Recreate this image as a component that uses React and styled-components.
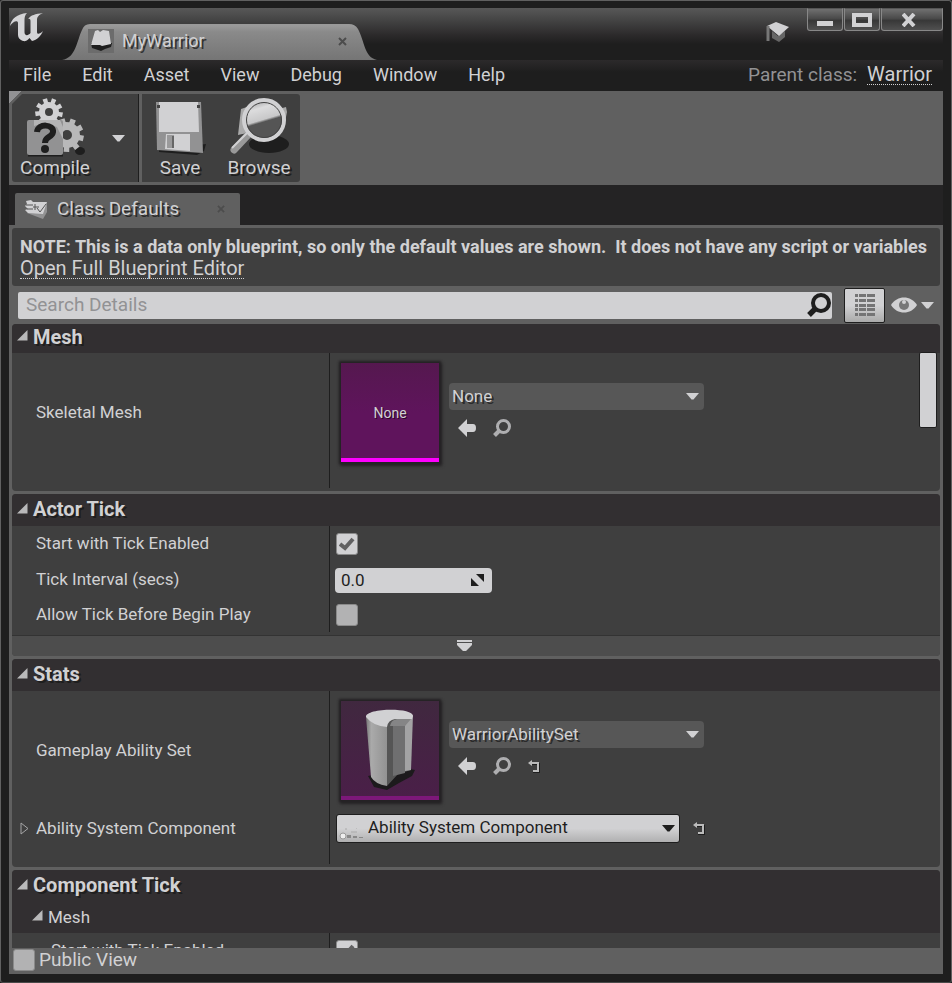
import React from "react";
import styled, { createGlobalStyle, css } from "styled-components";

const c = {
  ink: "#1e1e1e",
  frame: "#606060",
  panel: "#3f3f3f",
  head: "#322f31",
  text: "#d1d1d3",
  mid: "#929294",
  magenta: "#5f145c",
};

const Global = createGlobalStyle`
  *, *::before, *::after { box-sizing: border-box; }
  body { margin: 0; background: ${c.ink}; }
  body, button, input, select {
    font-family: Roboto, "Liberation Sans", sans-serif;
    font-size: 17px;
    line-height: 20px;
    color: ${c.text};
  }
  button { border: 0; padding: 0; background: none; }
  svg { display: block; flex: none; }
`;

const Window = styled.div`
  height: 100vh;
  display: flex;
  flex-direction: column;
  padding: 7px 8px 8px;
  border: 1px solid ${c.frame};
  border-bottom-color: #4a4a4a;
  border-radius: 3px;
  background: ${c.ink};
  overflow: hidden;
`;

const TitleBar = styled.header`
  flex: none;
  display: flex;
  height: 52px;
  background: linear-gradient(#585858, #444 12px, #2c2a2b 27px, ${c.ink} 36px);
`;

const Logo = styled.div`
  width: 53px;
  padding-top: 4px;
`;

const DocTab = styled.div`
  width: 315px;
  height: 36px;
  margin-top: 16px;
  padding: 0 30px 2px 26px;
  display: flex;
  align-items: center;
  background: linear-gradient(#999 2px, #8a8a8a 8px, #757575);
  clip-path: path("M0 36C14 34 15 16 20 6Q22 0 28 0H287Q293 0 296 5C303 18 302 33 315 36Z");
`;

const DocTitle = styled.span`
  flex: 1;
  margin-left: 8px;
  font-size: 18px;
  line-height: 22px;
  text-shadow: 2px 2px 0 #333;
`;

const CloseTab = styled.button`
  display: flex;
  color: #4c4c4c;
`;

const Tutorial = styled.button`
  margin: 13px 17px 0 auto;
  align-self: flex-start;
`;

const WindowButtons = styled.div`
  display: flex;
  height: 23px;
  gap: 1px;
`;

const WindowButton = styled.button`
  width: ${(p) => (p.$wide ? 62 : 36)}px;
  display: grid;
  place-items: center;
  border: 1px solid #888;
  border-top-color: #555;
  border-radius: 0 0 3px 3px;
  background: linear-gradient(#707070, #4a4a4a 45%, #383838 55%, #505050);
`;

const MenuBar = styled.nav`
  flex: none;
  display: flex;
  align-items: center;
  height: 31px;
  padding: 0 11px 2px 14px;
  background: linear-gradient(#2c2a2b, ${c.ink} 12px);
`;

const MenuItem = styled.button`
  margin-right: 31px;
  font-size: 18px;
  line-height: 22px;
`;

const ParentClass = styled.div`
  margin-left: auto;
  display: flex;
  align-items: baseline;
  gap: 10px;
  font-size: 19px;
  line-height: 22px;
  color: ${c.mid};
`;

const DottedLink = styled.a`
  align-self: ${(p) => (p.$inline ? "baseline" : "flex-start")};
  color: ${c.text};
  font-size: 20px;
  line-height: 20px;
  text-decoration: none;
  border-bottom: 1px dotted ${c.text};
`;

const ToolBar = styled.div`
  flex: none;
  display: flex;
  height: 94px;
  padding: 3px;
  background: linear-gradient(135deg, ${c.mid} 9px, ${c.frame} 9px);
`;

const ToolGroup = styled.div`
  display: flex;
  background: ${c.panel};
  border-radius: 3px;
  clip-path: polygon(10px 0, 100% 0, 100% 100%, 0 100%, 0 10px);
`;

const Tool = styled.button`
  display: flex;
  flex-direction: column;
  align-items: center;
  justify-content: flex-end;
  gap: 0;
  width: ${(p) => p.$width}px;
  padding-bottom: 3px;
  font-size: 19px;
  line-height: 22px;
  text-shadow: 2px 2px 0 ${c.ink};
`;

const ToolMenu = styled.button`
  display: grid;
  place-items: center;
  width: 40px;
`;

const ToolDivider = styled.div`
  width: 4px;
  background: ${c.frame};
  border-left: 1px solid ${c.ink};
`;

const TabStrip = styled.div`
  flex: none;
  display: flex;
  height: 40px;
  padding: 8px 6px 0;
  background: #242324;
`;

const PanelTab = styled.div`
  width: 225px;
  display: flex;
  align-items: center;
  padding: 0 15px 0 10px;
  border-radius: 2px 2px 0 0;
  background: ${c.frame};
`;

const PanelTitle = styled.span`
  flex: 1;
  margin-left: 9px;
  font-size: 19px;
  line-height: 22px;
  text-shadow: 2px 2px 0 #2c2c2c;
`;

const Content = styled.main`
  flex: 1;
  min-height: 0;
  display: flex;
  flex-direction: column;
  padding: 3px 3px 0;
  background: ${c.frame};
  overflow: hidden;
`;

const Note = styled.div`
  flex: none;
  display: flex;
  flex-direction: column;
  height: 58px;
  padding: 8px 0 0 8px;
  border-radius: 3px;
  background: ${c.panel};
  white-space: pre;
`;

const NoteText = styled.strong`
  font-size: 18px;
  line-height: 22px;
  font-weight: 700;
`;

const SearchRow = styled.div`
  flex: none;
  display: flex;
  align-items: center;
  height: 38px;
  padding: 0 6px;
`;

const SearchBox = styled.label`
  flex: 1;
  display: flex;
  align-items: center;
  height: 27px;
  padding: 0 1px 0 8px;
  border-radius: 2px;
  background: ${c.text};
`;

const SearchInput = styled.input`
  flex: 1;
  border: 0;
  padding: 0;
  outline: 0;
  background: none;
  font-size: 19px;
  line-height: 22px;
  color: ${c.ink};
  &::placeholder { color: ${c.mid}; opacity: 1; }
`;

const MatrixButton = styled.button`
  display: grid;
  place-items: center;
  width: 41px;
  height: 35px;
  margin-left: 12px;
  border: 1px solid ${c.ink};
  border-radius: 2px;
  background: linear-gradient(${c.text} 50%, #aaa);
`;

const EyeButton = styled.button`
  display: flex;
  align-items: center;
  gap: 4px;
  margin-left: 6px;
`;

const Details = styled.div`
  flex: 1;
  min-height: 0;
  position: relative;
  overflow: hidden;
`;

const ScrollThumb = styled.div`
  position: absolute;
  top: 28px;
  right: 3px;
  width: 18px;
  height: 76px;
  border: 1px solid ${c.ink};
  border-radius: 2px;
  background: ${c.text};
`;

const Section = styled.section`
  margin-bottom: 3px;
  border-radius: 4px;
  background: ${c.panel};
  overflow: hidden;
`;

const SectionHead = styled.h2`
  display: flex;
  align-items: center;
  gap: 5px;
  margin: 0;
  height: ${(p) => (p.$first ? 29 : 32)}px;
  padding: 0 5px ${(p) => (p.$first ? 4 : 2)}px;
  background: ${c.head};
  font-size: 20px;
  line-height: 22px;
  font-weight: 700;
  text-shadow: 2px 2px 0 ${c.ink};
`;

const SubHead = styled.h3`
  display: flex;
  align-items: center;
  gap: 5px;
  margin: 0;
  height: 31px;
  padding: 0 20px 2px;
  background: ${c.head};
  font-size: 17px;
  line-height: 20px;
  font-weight: 400;
`;

const Row = styled.div`
  display: grid;
  grid-template-columns: 317px 1fr;
  height: ${(p) => p.$height || 36}px;
`;

const Name = styled.label`
  display: flex;
  align-items: center;
  padding-left: ${(p) => (p.$nested ? 39 : 24)}px;
  padding-bottom: ${(p) => p.$lift || 2}px;
`;

const ExpandName = styled.div`
  display: flex;
  align-items: center;
  gap: 7px;
  height: 36px;
  padding-left: 8px;
`;

const Value = styled.div`
  display: flex;
  align-items: ${(p) => (p.$top ? "flex-start" : "center")};
  padding-left: 6px;
  border-left: 1px solid ${c.ink};
`;

const ComponentLine = styled.div`
  display: flex;
  align-items: center;
  gap: 13px;
  height: 36px;
`;

const SectionFoot = styled.div`
  height: 3px;
`;

const Advanced = styled.button`
  display: grid;
  place-items: center;
  width: 100%;
  height: 21px;
  padding-right: 24px;
  background: #4d4d4d;
  border-top: 1px solid #333;
`;

const Thumb = styled.div`
  width: 98px;
  height: 99px;
  margin: 10px 10px 0 5px;
  display: grid;
  place-items: center;
  background: linear-gradient(#55184f, ${c.magenta} 50px);
  border-bottom: 4px solid #f0f;
  box-shadow: 0 0 2px 2px #252325, 1px 2px 3px 2px #252325;
  font-size: 14px;
  line-height: 16px;
  text-shadow: 1px 1px 0 #2a0a29;
  ${(p) =>
    p.$asset &&
    css`
      background: linear-gradient(#40283f, #4a1f48);
      border-bottom-color: #7d1879;
    `}
`;

const ThumbText = styled.span`
  padding-top: 4px;
`;

const Picker = styled.div`
  display: flex;
  flex-direction: column;
  gap: 9px;
  margin-top: 30px;
`;

const SelectBox = styled.div`
  display: grid;
  align-items: center;
  width: ${(p) => (p.$light ? 344 : 255)}px;
  & > * { grid-area: 1 / 1; }
  & > svg { justify-self: end; margin-right: 5px; pointer-events: none; }
  & > svg.lead { justify-self: start; align-self: end; margin: 0 0 3px 3px; }
`;

const Select = styled.select`
  appearance: none;
  width: 100%;
  height: ${(p) => (p.$light ? 29 : 27)}px;
  border: 0;
  border-radius: 4px;
  padding: 0 24px 2px 3px;
  background: #575757;
  text-shadow: 2px 2px 0 #2a2a2a;
  ${(p) =>
    p.$light &&
    css`
      border: 1px solid ${c.ink};
      border-radius: 3px;
      padding-left: 31px;
      background: linear-gradient(${c.text} 50%, #b0b0b1);
      color: ${c.ink};
      text-shadow: none;
    `}
`;

const Actions = styled.div`
  display: flex;
  align-items: center;
  gap: 17px;
  height: 18px;
  padding-left: 9px;
`;

const IconButton = styled.button`
  display: flex;
`;

const Check = styled.span`
  display: inline-grid;
  place-items: center;
  & > * { grid-area: 1 / 1; }
  & > svg { pointer-events: none; display: none; }
  & > input:checked + svg { display: block; }
`;

const CheckInput = styled.input`
  appearance: none;
  width: 22px;
  height: 22px;
  margin: 0;
  border: 1px solid #8a8a8a;
  border-radius: 3px;
  background: #b2b2b3;
  &:checked { background: ${c.text}; }
`;

const NumberBox = styled.div`
  display: flex;
  align-items: center;
  width: 157px;
  height: 25px;
  margin-left: -1px;
  padding: 0 8px 1px 6px;
  border-radius: 4px;
  background: ${c.text};
`;

const NumberInput = styled.input`
  flex: 1;
  min-width: 0;
  border: 0;
  padding: 0;
  outline: 0;
  background: none;
  color: ${c.ink};
`;

const Footer = styled.label`
  flex: none;
  display: flex;
  align-items: flex-start;
  gap: 4px;
  height: 26px;
  padding: 1px;
  font-size: 19px;
  line-height: 22px;
`;

/* ---------- icons ---------- */

const Unreal = () => (
  <svg width="36" height="31" viewBox="0 0 36 31" fill="#d4d4d6">
    <path d="M1 14C2 7 8 2 18 1C16 3 15.500 5 15.500 8V20C15.500 24 19 24 21.500 21V9C21.500 7 20.500 6.500 19 7C22 3 26 2 34 1C29.500 3 28 5 28 8V20C28 23 31 22 34 19C32 24 28 28 23 29L20.500 26C18 29 16 29.500 14 29C11 28 9 26 9 23V11C9 8 4 9 1 14Z" />
  </svg>
);

const Arrow = ({ color = c.text }) => (
  <svg width="13" height="7" viewBox="0 0 13 7">
    <path d="M0 0H13L7.500 6.500H5.500Z" fill={color} />
  </svg>
);

const Cross = ({ size = 9 }) => (
  <svg width={size} height={size} viewBox="0 0 9 9">
    <path d="M1 1L8 8M8 1L1 8" stroke="currentColor" strokeWidth="2" />
  </svg>
);

const Expanded = () => (
  <svg width="11" height="13" viewBox="0 0 11 13">
    <path d="M10.500 0V10.500H0Z" fill="#b9b9ba" />
  </svg>
);

const BookIcon = () => (
  <svg width="26" height="24" viewBox="0 0 26 24">
    <path d="M0 0H26V24H0Z" fill="#6c6c6c" />
    <path d="M3 14L24 14L23 18L17 20L13 22L4 19Z" fill={c.ink} />
    <path d="M7 2L10 1L12 3L15 1L21 2L23 15L14 17L12 16L3 16Z" fill={c.text} />
  </svg>
);

const CapIcon = () => (
  <svg width="24" height="22" viewBox="0 0 24 22">
    <path d="M6 10L12 15L19 10V16L13 21L6 17Z" fill="#666" />
    <path d="M1 5L10 1L23 6L13 15Z" fill={c.text} />
    <path d="M2 5V20" stroke="#777" strokeWidth="3" />
  </svg>
);

function gear(cx, cy, r, depth, teeth) {
  const pts = [];
  for (let i = 0; i < teeth; i++) {
    [[-0.3, r], [-0.24, r + depth], [0.24, r + depth], [0.3, r]].forEach(([o, d]) => {
      const a = ((i + 0.3 + o) / teeth) * Math.PI * 2;
      pts.push((cx + Math.cos(a) * d).toFixed(1) + " " + (cy + Math.sin(a) * d).toFixed(1));
    });
  }
  return "M" + pts.join("L") + "Z";
}

const hole = (x, y, r) => `M${x - r} ${y}a${r} ${r} 0 1 0 ${r * 2} 0a${r} ${r} 0 1 0 ${-r * 2} 0Z`;

const CompileIcon = () => (
  <svg width="60" height="60" viewBox="-2 0 60 60">
    <ellipse cx="53" cy="54" rx="5" ry="4" fill={c.ink} />
    <path fillRule="evenodd" d={gear(40, 38, 13, 4, 9) + hole(40, 38, 5)} fill="#b8b8b9" />
    <path fillRule="evenodd" d={gear(22, 15, 10, 4, 9) + hole(22, 15, 4)} fill={c.text} />
    <path d="M1 58H36" stroke={c.ink} strokeWidth="3" />
    <rect y="23" width="36" height="35" rx="2" fill="#929293" />
    <path d="M7 23H33L36 30V42L30 30L17 26L7 29Z" fill="#b4b4b5" />
    <path d="M10 35C11 26 27 27 26 35C25 41 18 39 18 46" fill="none" stroke={c.ink} strokeWidth="6" />
    <circle cx="18" cy="52" r="4" fill={c.ink} />
  </svg>
);

const SaveIcon = () => (
  <svg width="52" height="58" viewBox="0 0 52 58">
    <path d="M5 51L52 45L50 52L43 56L5 53Z" fill={c.ink} />
    <path d="M2 3H47L49 54L3 51Z" fill="#929293" />
    <path d="M5 3H44L45 33H5Z" fill={c.text} />
    <path d="M12 35H36V52L11 50Z" fill={c.text} />
    <path d="M13 36H20V49H13Z" fill="#9a9a9b" />
    <path d="M18 37H20V49H18Z" fill="#666" />
    <path d="M3 6H6V9H3ZM43 6H46V9H43Z" fill="#444" />
  </svg>
);

const BrowseIcon = () => (
  <svg width="60" height="60" viewBox="0 0 60 60">
    <defs>
      <linearGradient id="lens" x1="0" y1="0" x2="0.3" y2="1">
        <stop offset="0" stopColor="#8a8a8b" />
        <stop offset="0.3" stopColor="#dcdcdd" />
        <stop offset="0.58" stopColor="#c8c8c9" />
        <stop offset="0.64" stopColor="#555" />
        <stop offset="1" stopColor="#555" />
      </linearGradient>
    </defs>
    <ellipse cx="40" cy="47" rx="20" ry="9" fill={c.ink} />
    <path d="M12 12L18 10V36L9 38ZM50 12L57 10L58 15L55 30H50Z" fill="#aaa" />
    <path d="M19 38L5 53" stroke="#999" strokeWidth="7" strokeLinecap="round" />
    <path d="M18 36L3 51" stroke={c.text} strokeWidth="2" />
    <circle cx="35" cy="23" r="20" fill="url(#lens)" stroke={c.text} strokeWidth="4" />
    <circle cx="35" cy="23" r="17.500" fill="none" stroke="#444" />
  </svg>
);

const DefaultsIcon = () => (
  <svg width="23" height="19" viewBox="0 0 23 19">
    <path d="M2 13L18 19L22 12V4Z" fill="#929293" />
    <path d="M1 1L6 0L8 2H22L18 14L3 13L0 10L3 9L0 6L2 4Z" fill={c.text} />
    <path d="M1 5H8M2 9H8M10 4V10M8 7H14M12 8L15 12L21 4" fill="none" stroke="#555" />
  </svg>
);

const Lens = ({ size = 18, color = "#aeaeb0", width = 3 }) => (
  <svg width={size} height={size} viewBox="0 0 18 18" fill="none" stroke={color}>
    <circle cx="10.500" cy="7.500" r="6" strokeWidth={width} />
    <path d="M6 12L1.500 16.500" strokeWidth="4" />
  </svg>
);

const MatrixIcon = () => (
  <svg width="21" height="23" viewBox="0 0 21 23" fill="#747475">
    {[0, 5, 10, 14, 19].map((y) => (
      <path key={y} d={`M1 ${y}H4V${y + 3}H1ZM5 ${y}H12V${y + 3}H5ZM13 ${y}H21V${y + 3}H13Z`} />
    ))}
  </svg>
);

const EyeIcon = () => (
  <svg width="26" height="16" viewBox="0 0 26 16">
    <path d="M0 8C6 -2 20 -2 26 8C20 18 6 18 0 8Z" fill={c.text} />
    <circle cx="13" cy="8" r="5" fill="#777" />
    <circle cx="13" cy="5" r="2" fill={c.text} />
  </svg>
);

const UseArrow = () => (
  <svg width="18" height="18" viewBox="0 0 18 18">
    <path d="M0 9L9 0V5H15Q18 5 18 9Q18 13 15 13H9V18Z" fill={c.text} />
  </svg>
);

const ResetIcon = () => (
  <svg width="12" height="13" viewBox="0 0 12 13" fill="none">
    <path d="M3 4H11V12H5" stroke={c.ink} strokeWidth="2" />
    <path d="M2 3H10V11H5" stroke="#bbb" strokeWidth="2" />
    <path d="M0 3L4 0V6Z" fill="#bbb" />
  </svg>
);

const Tick = () => (
  <svg width="16" height="14" viewBox="0 0 16 14">
    <path d="M1 7L6 11L14 2" fill="none" stroke="#616162" strokeWidth="4" />
  </svg>
);

const SpinIcon = () => (
  <svg width="13" height="12" viewBox="0 0 13 12" fill={c.ink}>
    <path d="M5 0H13V8Z M0 4L8 12H0Z" />
  </svg>
);

const AdvancedIcon = () => (
  <svg width="15" height="12" viewBox="0 0 15 12" fill={c.text}>
    <path d="M0 0H15V2H0ZM0 3H15V5L9 11H6L0 5Z" />
  </svg>
);

const CollapsedIcon = () => (
  <svg width="9" height="13" viewBox="0 0 9 13">
    <path d="M1 1L8 6.500L1 12Z" fill="none" stroke="#a5a5a6" />
  </svg>
);

const CylinderIcon = () => (
  <svg width="90" height="86" viewBox="0 0 90 86">
    <defs>
      <linearGradient id="side">
        <stop offset="0" stopColor="#777" />
        <stop offset="0.25" stopColor="#aaa" />
        <stop offset="1" stopColor="#929292" />
      </linearGradient>
    </defs>
    <path d="M23 70L60 62L70 64L67 70L54 77L42 84L29 81Z" fill="#1c1a1c" />
    <path d="M21 11L42 13V80Q30 78 26 71Z" fill="url(#side)" />
    <path d="M42 12L67 9L66 64L53 68L42 80Z" fill="#555" />
    <path d="M48 15H60V67L48 70Z" fill="#6f6f70" />
    <path d="M60 11L68 9L66 64L60 65Z" fill="#a3a3a4" />
    <path d="M21 11C20 2 68 1 68 10L67 13H50Q43 14 42 21Q28 20 21 11Z" fill={c.text} />
    <path d="M45 20Q46 14 52 13L66 13L60 20Z" fill="#858586" />
  </svg>
);

const ComponentIcon = () => (
  <svg className="lead" width="24" height="12" viewBox="0 0 24 12">
    <circle cx="4" cy="8" r="3" fill="#eee" stroke="#999" />
    <path d="M8 7H12V10H8ZM14 8H18V10H14ZM20 9H24V10H20Z" fill="#888" />
    <path d="M6 1H8M17 0H18M12 4H18" stroke="#aaa" />
  </svg>
);

/* ---------- parts ---------- */

function Combo({ id, label, value, light }) {
  return (
    <SelectBox $light={light}>
      <Select id={id} aria-label={label} $light={light} defaultValue={value}>
        <option>{value}</option>
      </Select>
      {light && <ComponentIcon />}
      <Arrow color={light ? c.ink : c.text} />
    </SelectBox>
  );
}

function CheckBox({ id, checked }) {
  return (
    <Check>
      <CheckInput id={id} type="checkbox" defaultChecked={checked} />
      <Tick />
    </Check>
  );
}

function Heading({ children, first }) {
  return (
    <SectionHead $first={first}>
      <Expanded />
      {children}
    </SectionHead>
  );
}

export default function App() {
  return (
    <>
      <Global />
      <Window>
        <TitleBar>
          <Logo><Unreal /></Logo>
          <DocTab>
            <BookIcon />
            <DocTitle>MyWarrior</DocTitle>
            <CloseTab aria-label="Close MyWarrior"><Cross /></CloseTab>
          </DocTab>
          <Tutorial aria-label="Tutorials"><CapIcon /></Tutorial>
          <WindowButtons>
            <WindowButton aria-label="Minimize">
              <svg width="18" height="16" viewBox="0 0 18 16"><path d="M1 9H17V14H1Z" fill={c.text} /></svg>
            </WindowButton>
            <WindowButton aria-label="Maximize">
              <svg width="20" height="14" viewBox="0 0 20 14"><path d="M2 2H18V12H2Z" fill="none" stroke={c.text} strokeWidth="4" /></svg>
            </WindowButton>
            <WindowButton $wide aria-label="Close">
              <svg width="20" height="14" viewBox="2 0 20 14"><path d="M3 1L14 13M14 1L3 13" stroke={c.text} strokeWidth="4" /></svg>
            </WindowButton>
          </WindowButtons>
        </TitleBar>

        <MenuBar>
          {["File", "Edit", "Asset", "View", "Debug", "Window", "Help"].map((m) => (
            <MenuItem key={m}>{m}</MenuItem>
          ))}
          <ParentClass>
            Parent class:
            <DottedLink $inline href="#warrior">Warrior</DottedLink>
          </ParentClass>
        </MenuBar>

        <ToolBar>
          <ToolGroup>
            <Tool $width={86}><CompileIcon />Compile</Tool>
            <ToolMenu aria-label="Compile options"><Arrow /></ToolMenu>
            <ToolDivider />
            <Tool $width={76}><SaveIcon />Save</Tool>
            <Tool $width={82}><BrowseIcon />Browse</Tool>
          </ToolGroup>
        </ToolBar>

        <TabStrip>
          <PanelTab>
            <DefaultsIcon />
            <PanelTitle>Class Defaults</PanelTitle>
            <CloseTab aria-label="Close Class Defaults"><Cross size={8} /></CloseTab>
          </PanelTab>
        </TabStrip>

        <Content>
          <Note>
            <NoteText>
              {"NOTE: This is a data only blueprint, so only the default values are shown.  It does not have any script or variables"}
            </NoteText>
            <DottedLink href="#full-editor">Open Full Blueprint Editor</DottedLink>
          </Note>
          <SearchRow>
            <SearchBox>
              <SearchInput type="text" placeholder="Search Details" aria-label="Search Details" />
              <Lens size={24} color={c.ink} />
            </SearchBox>
            <MatrixButton aria-label="Property matrix"><MatrixIcon /></MatrixButton>
            <EyeButton aria-label="View options"><EyeIcon /><Arrow /></EyeButton>
          </SearchRow>

          <Details>
            <Section>
              <Heading first>Mesh</Heading>
              <Row $height={135}>
                <Name htmlFor="skeletal" $lift={18}>Skeletal Mesh</Name>
                <Value $top>
                  <Thumb><ThumbText>None</ThumbText></Thumb>
                  <Picker>
                    <Combo id="skeletal" value="None" />
                    <Actions>
                      <IconButton aria-label="Use selected asset"><UseArrow /></IconButton>
                      <IconButton aria-label="Browse to asset"><Lens /></IconButton>
                    </Actions>
                  </Picker>
                </Value>
              </Row>
              <SectionFoot />
            </Section>

            <Section>
              <Heading>Actor Tick</Heading>
              <Row>
                <Name htmlFor="start-tick">Start with Tick Enabled</Name>
                <Value><CheckBox id="start-tick" checked /></Value>
              </Row>
              <Row>
                <Name htmlFor="interval">Tick Interval (secs)</Name>
                <Value>
                  <NumberBox>
                    <NumberInput id="interval" type="text" defaultValue="0.0" />
                    <SpinIcon />
                  </NumberBox>
                </Value>
              </Row>
              <Row $height={34}>
                <Name htmlFor="allow-tick">Allow Tick Before Begin Play</Name>
                <Value><CheckBox id="allow-tick" /></Value>
              </Row>
              <SectionFoot />
              <Advanced aria-label="Show advanced"><AdvancedIcon /></Advanced>
            </Section>

            <Section>
              <Heading>Stats</Heading>
              <Row $height={119}>
                <Name htmlFor="ability-set">Gameplay Ability Set</Name>
                <Value $top>
                  <Thumb $asset><CylinderIcon /></Thumb>
                  <Picker>
                    <Combo id="ability-set" value="WarriorAbilitySet" />
                    <Actions>
                      <IconButton aria-label="Use selected asset"><UseArrow /></IconButton>
                      <IconButton aria-label="Browse to asset"><Lens /></IconButton>
                      <IconButton aria-label="Reset to default"><ResetIcon /></IconButton>
                    </Actions>
                  </Picker>
                </Value>
              </Row>
              <Row $height={54}>
                <ExpandName><CollapsedIcon /><label htmlFor="ability-component">Ability System Component</label></ExpandName>
                <Value $top>
                  <ComponentLine>
                    <Combo id="ability-component" value="Ability System Component" light />
                    <IconButton aria-label="Reset to default"><ResetIcon /></IconButton>
                  </ComponentLine>
                </Value>
              </Row>
              <SectionFoot />
            </Section>

            <Section>
              <Heading>Component Tick</Heading>
              <SubHead><Expanded />Mesh</SubHead>
              <Row>
                <Name htmlFor="mesh-tick" $nested>Start with Tick Enabled</Name>
                <Value><CheckBox id="mesh-tick" checked /></Value>
              </Row>
            </Section>
            <ScrollThumb />
          </Details>

          <Footer>
            <CheckBox id="public-view" />
            Public View
          </Footer>
        </Content>
      </Window>
    </>
  );
}
